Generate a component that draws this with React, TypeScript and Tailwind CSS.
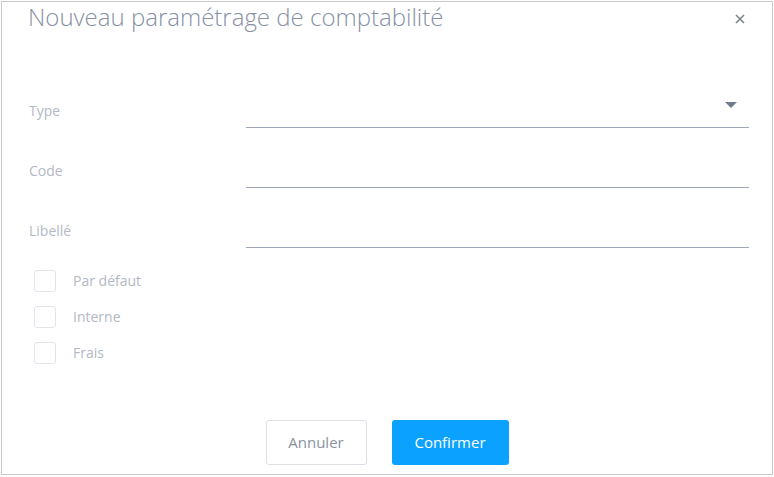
import { useState } from "react";

const FONT = { fontFamily: "'Open Sans', Lato, sans-serif" };

function Field({ label, select }: { label: string; select?: boolean }) {
  return (
    <div className="flex items-end">
      <label className="w-[217px] shrink-0 pb-[7px] text-[14px] leading-5 text-[#b3b9c5]">{label}</label>
      <div className="flex h-[40px] flex-1 items-center justify-end border-b border-[#9ea6b6] pr-[12px]">
        {select && (
          <svg width="12" height="7" viewBox="0 0 12 7" className="mt-[-4px]">
            <path d="M0 0h12L6 6z" fill="#6f7a8e" />
          </svg>
        )}
      </div>
    </div>
  );
}

function Check({ label }: { label: string }) {
  const [on, setOn] = useState(false);
  return (
    <label className="flex items-center gap-[17px] cursor-pointer" onClick={() => setOn(!on)}>
      <span className="ml-[5px] h-[22px] w-[22px] rounded-[3px] border border-[#e1e4ea] bg-white" />
      <span className="text-[14px] leading-5 text-[#b3b9c5]">{label}</span>
    </label>
  );
}

export default function App() {
  return (
    <div className="min-h-screen bg-white" style={FONT}>
      <div className="ml-px mt-px flex h-[474px] w-[772px] flex-col border border-[#c9c9c9] bg-white">
        <div className="flex h-[30px] items-start justify-between pl-[26px] pr-[27px]">
          <h1 className="text-[24px] font-light leading-[30px] text-[#8791a4]">Nouveau paramétrage de comptabilité</h1>
          <button className="mt-[12px] text-[#7d828c]">
            <svg width="10" height="10" viewBox="0 0 10 10">
              <path d="M1 1l8 8M9 1l-8 8" stroke="currentColor" strokeWidth="1.6" />
            </svg>
          </button>
        </div>

        <div className="mt-[56px] flex flex-col gap-5 pl-[27px] pr-[23px]">
          <Field label="Type" select />
          <Field label="Code" />
          <Field label="Libellé" />
        </div>

        <div className="mt-[22px] flex flex-col gap-[14px] pl-[27px]">
          <Check label="Par défaut" />
          <Check label="Interne" />
          <Check label="Frais" />
        </div>

        <div className="mt-[56px] flex justify-center gap-[25px]">
          <button className="h-[45px] w-[101px] rounded-[3px] border border-[#dcdfe5] bg-white text-[15px] text-[#8a92a3]">Annuler</button>
          <button className="h-[45px] w-[117px] rounded-[3px] bg-[#0ba2ff] text-[15px] text-white">Confirmer</button>
        </div>
      </div>
    </div>
  );
}
